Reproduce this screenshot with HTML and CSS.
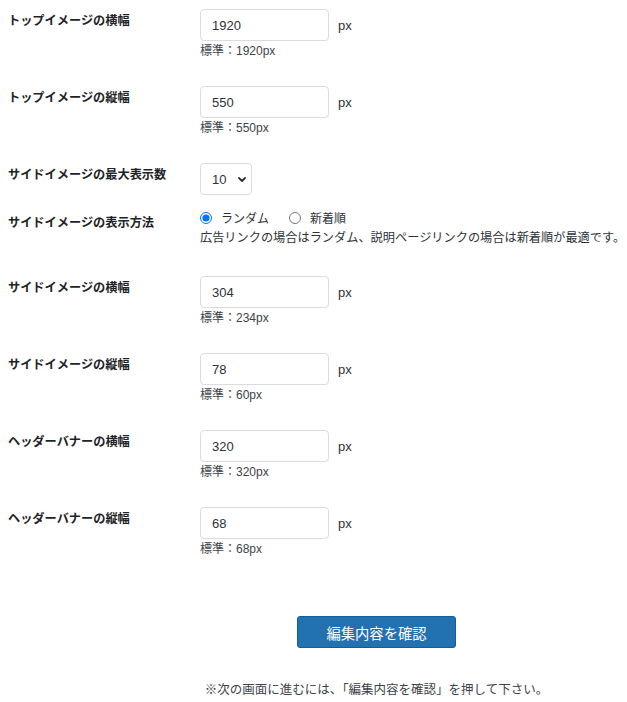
FILE: index.html
```html
<!DOCTYPE html>
<html lang="ja">
<head>
<meta charset="utf-8">
<title>設定</title>
<link rel="stylesheet" href="styles.css">
</head>
<body>
<form class="settings">
  <div class="row">
    <div class="row-label">トップイメージの横幅</div>
    <div class="row-field">
      <div class="input-line"><input class="num" type="text" value="1920"><span class="unit">px</span></div>
      <div class="desc">標準：1920px</div>
    </div>
  </div>
  <div class="row">
    <div class="row-label">トップイメージの縦幅</div>
    <div class="row-field">
      <div class="input-line"><input class="num" type="text" value="550"><span class="unit">px</span></div>
      <div class="desc">標準：550px</div>
    </div>
  </div>
  <div class="row row-select">
    <div class="row-label">サイドイメージの最大表示数</div>
    <div class="row-field">
      <span class="select-wrap">
        <select class="sel"><option>10</option></select>
        <svg class="chev" width="8" height="5" viewBox="0 0 8 5"><path d="M1 1 L4 4 L7 1" fill="none" stroke="#2c3338" stroke-width="1.8" stroke-linecap="round" stroke-linejoin="round"/></svg>
      </span>
    </div>
  </div>
  <div class="row row-radio">
    <div class="row-label">サイドイメージの表示方法</div>
    <div class="row-field">
      <div class="radio-line">
        <label class="radio"><input type="radio" name="order" checked><span>ランダム</span></label>
        <label class="radio"><input type="radio" name="order"><span>新着順</span></label>
      </div>
      <div class="radio-desc">広告リンクの場合はランダム、説明ページリンクの場合は新着順が最適です。</div>
    </div>
  </div>
  <div class="row">
    <div class="row-label">サイドイメージの横幅</div>
    <div class="row-field">
      <div class="input-line"><input class="num" type="text" value="304"><span class="unit">px</span></div>
      <div class="desc">標準：234px</div>
    </div>
  </div>
  <div class="row">
    <div class="row-label">サイドイメージの縦幅</div>
    <div class="row-field">
      <div class="input-line"><input class="num" type="text" value="78"><span class="unit">px</span></div>
      <div class="desc">標準：60px</div>
    </div>
  </div>
  <div class="row">
    <div class="row-label">ヘッダーバナーの横幅</div>
    <div class="row-field">
      <div class="input-line"><input class="num" type="text" value="320"><span class="unit">px</span></div>
      <div class="desc">標準：320px</div>
    </div>
  </div>
  <div class="row">
    <div class="row-label">ヘッダーバナーの縦幅</div>
    <div class="row-field">
      <div class="input-line"><input class="num" type="text" value="68"><span class="unit">px</span></div>
      <div class="desc">標準：68px</div>
    </div>
  </div>
  <div class="submit-area">
    <button class="btn-primary" type="button">編集内容を確認</button>
    <p class="note">※次の画面に進むには、「編集内容を確認」を押して下さい。</p>
  </div>
</form>
</body>
</html>
```

FILE: styles.css
```css
html, body {
  margin: 0;
  padding: 0;
  background: #ffffff;
}

body {
  font-family: "Liberation Sans", "Noto Sans CJK JP", sans-serif;
  color: #1d2327;
}

.settings {
  margin: 0;
  padding: 0 0 0 8px;
}

.row {
  display: flex;
}

.row-label {
  width: 192px;
  flex: none;
  box-sizing: border-box;
  padding-top: 13px;
  font-size: 12.2px;
  line-height: 17px;
  font-weight: 700;
  color: #1d2327;
}

.row-field {
  padding-top: 9px;
  padding-bottom: 17px;
}

.input-line {
  display: flex;
  align-items: center;
  gap: 9px;
}

.num {
  box-sizing: border-box;
  width: 129px;
  height: 32px;
  margin: 0;
  padding: 0 11px;
  border: 1px solid #dcdcde;
  border-radius: 4px;
  font-family: "Liberation Sans", sans-serif;
  font-size: 13px;
  color: #2c3338;
  background: #fff;
  outline: none;
}

.unit {
  font-size: 13px;
  color: #2c3338;
}

.desc {
  margin-top: 2px;
  font-size: 12px;
  line-height: 17px;
  color: #3c434a;
}

/* select row */
.row-select .row-field {
  padding-bottom: 6px;
}

.select-wrap {
  position: relative;
  display: inline-block;
  vertical-align: top;
}

.sel {
  display: block;
  box-sizing: border-box;
  width: 52px;
  height: 32px;
  margin: 0;
  padding: 0 0 0 11px;
  border: 1px solid #dcdcde;
  border-radius: 4px;
  background: #fff;
  font-family: "Liberation Sans", sans-serif;
  font-size: 13px;
  color: #2c3338;
  -webkit-appearance: none;
  appearance: none;
  outline: none;
}

.chev {
  position: absolute;
  right: 6px;
  top: 14px;
  pointer-events: none;
}

/* radio row */
.row-radio .row-label {
  padding-top: 14px;
}

.row-radio .row-field {
  padding-top: 6px;
  padding-bottom: 18px;
}

.radio-line {
  display: flex;
  align-items: center;
  height: 21px;
  gap: 20px;
}

.radio {
  display: flex;
  align-items: center;
  gap: 9px;
  font-size: 12px;
  color: #2c3338;
}

.radio input {
  width: 12px;
  height: 12px;
  margin: 0;
}

.radio-desc {
  font-size: 12.2px;
  line-height: 21px;
  color: #2c3338;
  white-space: nowrap;
}

/* submit */
.submit-area {
  margin-left: 192px;
  width: 353px;
  margin-top: 41px;
  text-align: center;
}

.btn-primary {
  box-sizing: border-box;
  width: 159px;
  height: 32px;
  margin: 0;
  padding: 0;
  border: 1px solid #135e96;
  border-radius: 3px;
  background: #2271b1;
  color: #ffffff;
  font-family: "Liberation Sans", "Noto Sans CJK JP", sans-serif;
  font-size: 14.3px;
  cursor: pointer;
}

.note {
  margin: 32px 0 0;
  font-size: 12.5px;
  line-height: 20px;
  color: #3c434a;
  white-space: nowrap;
}
```
